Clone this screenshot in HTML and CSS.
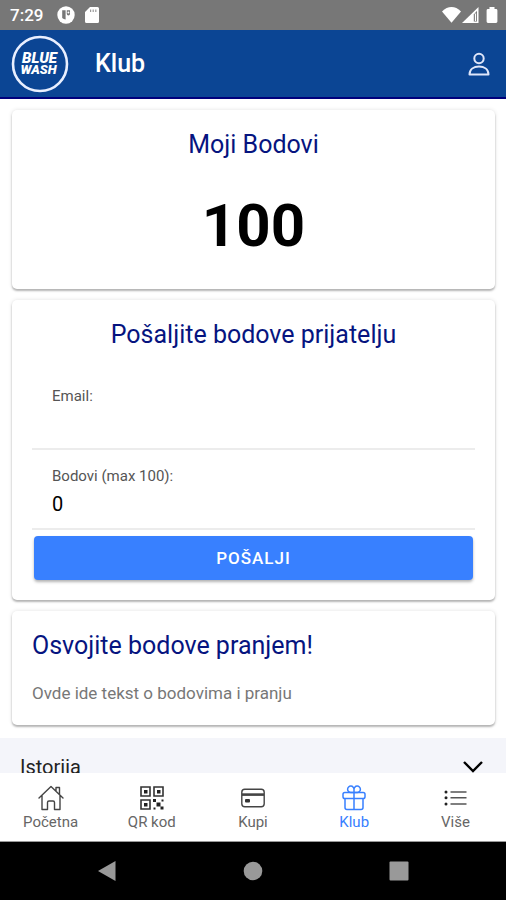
FILE: index.html
```html
<!DOCTYPE html>
<html lang="sr-Latn">
<head>
<meta charset="utf-8">
<meta name="viewport" content="width=device-width, initial-scale=1">
<title>Klub</title>
<link rel="stylesheet" href="styles.css">
</head>
<body>
<div class="app">
  <div class="status">
    <span class="time">7:29</span>
    <svg class="status-icon" width="18" height="18" viewBox="0 0 18 18" aria-hidden="true">
      <circle cx="9" cy="9" r="8.7" fill="#fff"/>
      <path d="M5.200 4.200h3.400v9.400a5.500 5.500 0 0 1-3.400-1.600z" fill="#777"/>
      <path d="M9.800 4.200H13v3.600a1.600 1.600 0 0 1-3.200 0z" fill="#777"/>
      <circle cx="11.400" cy="6.500" r="1" fill="#fff"/>
    </svg>
    <svg class="status-icon" width="14" height="16" viewBox="0 0 14 16" aria-hidden="true">
      <path d="M5 0h7.500A1.500 1.500 0 0 1 14 1.500v13a1.500 1.500 0 0 1-1.500 1.500h-11A1.500 1.500 0 0 1 0 14.500V5z" fill="#fff"/>
      <path d="M5 2.500h1.200v2.500H5zM7.600 2.500h1.200v2.500H7.600zM10.200 2.500h1.200v2.500h-1.200z" fill="#999"/>
    </svg>
    <span class="spacer"></span>
    <svg width="56" height="18" viewBox="0 0 56 18" aria-hidden="true">
      <path d="M0 5.400Q4.500 1 9.500 1T19 5.400L9.500 16.800z" fill="#fff"/>
      <path d="M36.500 1v16H20z" fill="#fff"/>
      <path d="M31.800 8.500l3.200-3.700v10.700h-3.200z" fill="#777"/>
      <path d="M32.900 8v7h1.200V7z" fill="#fff"/>
      <path d="M47.500 1h5v2h1.500a1.400 1.400 0 0 1 1.400 1.400v11.200A1.400 1.400 0 0 1 54 17h-8a1.400 1.400 0 0 1-1.400-1.400V4.400A1.400 1.400 0 0 1 46 3h1.500z" fill="#fff"/>
    </svg>
  </div>

  <header class="header">
    <svg class="logo" width="58" height="58" viewBox="0 0 58 58" role="img" aria-label="Blue Wash">
      <circle cx="29" cy="29" r="27" fill="none" stroke="#e9efff" stroke-width="2.600"/>
      <text class="logo-text" x="28.500" y="28" text-anchor="middle">BLUE</text>
      <text class="logo-text small" x="27.500" y="39" text-anchor="middle">WASH</text>
    </svg>
    <h1 class="page-title">Klub</h1>
    <button class="icon-button" type="button" aria-label="Profil">
      <svg width="22" height="24" viewBox="0 0 22 24" fill="none" stroke="#dfe6fa" stroke-width="2">
        <circle cx="11" cy="6.500" r="4.700"/>
        <path d="M1.500 22.500c0-5.500 4.500-8 9.500-8s9.500 2.500 9.500 8z" stroke-linejoin="round"/>
      </svg>
    </button>
  </header>

  <main class="content">
    <section class="card points">
      <h2 class="card-title">Moji Bodovi</h2>
      <p class="score">100</p>
    </section>

    <form class="card send">
      <h2 class="card-title">Pošaljite bodove prijatelju</h2>
      <div class="field">
        <label for="email">Email:</label>
        <input id="email" type="email">
      </div>
      <div class="field">
        <label for="bodovi">Bodovi (max 100):</label>
        <input id="bodovi" type="text" inputmode="numeric" value="0">
      </div>
      <button class="submit" type="button">POŠALJI</button>
    </form>

    <section class="card info">
      <h2 class="card-title">Osvojite bodove pranjem!</h2>
      <p class="note">Ovde ide tekst o bodovima i pranju</p>
    </section>

    <button class="history" type="button" aria-expanded="false">
      <span>Istorija</span>
      <svg width="20" height="12" viewBox="0 0 20 12" fill="none" stroke="#000" stroke-width="2.400" aria-hidden="true"><path d="M1 1l9 9 9-9"/></svg>
    </button>
  </main>

  <nav class="tabs">
    <a class="tab" href="#pocetna">
      <svg width="26" height="26" viewBox="0 0 26 26" fill="none" stroke="#444" stroke-width="1.400" stroke-linejoin="round" stroke-linecap="round">
        <path d="M1 13L13 1.500 25 13M18 6V2.500h3.500v7M4 10.500V24.500h5.500v-7a1.500 1.500 0 0 1 1.500-1.500h4a1.500 1.500 0 0 1 1.500 1.500v7H22V10.500"/>
      </svg>
      <span>Početna</span>
    </a>
    <a class="tab" href="#qr">
      <svg width="26" height="26" viewBox="0 0 26 26">
        <path d="M2 2h9v9H2zM15 2h9v9h-9zM2 15h9v9H2z" fill="none" stroke="#333" stroke-width="1.600"/>
        <path d="M5 5h3.500v3.500H5zM18 5h3.500v3.500H18zM5 18h3.500v3.500H5zM14 14h3v3h-3zM17.500 17.500h4v4h-4zM21.500 21.500h3v3h-3zM22.500 14.500h2v2h-2zM14.500 22.500h2v2h-2z" fill="#222"/>
      </svg>
      <span>QR kod</span>
    </a>
    <a class="tab" href="#kupi">
      <svg width="26" height="26" viewBox="0 0 26 26">
        <rect x="1.800" y="4.200" width="22.400" height="17.600" rx="3" fill="none" stroke="#444" stroke-width="1.400"/>
        <path d="M2 8.300h22v2.600H2z" fill="#444"/>
        <rect x="5" y="14" width="5" height="3.600" rx="1" fill="#333"/>
      </svg>
      <span>Kupi</span>
    </a>
    <a class="tab active" href="#klub" aria-current="page">
      <svg width="26" height="26" viewBox="0 0 26 26" fill="none" stroke="#3880ff" stroke-width="1.500" stroke-linejoin="round">
        <rect x="2" y="7.500" width="22" height="6" rx="1.800"/>
        <path d="M4 13.500v9a2 2 0 0 0 2 2h14a2 2 0 0 0 2-2v-9M13 4.500v20M13 7.500V4.500a3.200 3.200 0 1 0-3.200 3zM13 7.500V4.500a3.200 3.200 0 1 1 3.200 3z"/>
      </svg>
      <span>Klub</span>
    </a>
    <a class="tab" href="#vise">
      <svg width="26" height="26" viewBox="0 0 26 26">
        <path d="M8.500 7h16M8.500 12.700h16M8.500 19h16" stroke="#555" stroke-width="1.500"/>
        <g fill="#222"><circle cx="4" cy="7" r="1.500"/><circle cx="4" cy="12.700" r="1.500"/><circle cx="4" cy="19" r="1.500"/></g>
      </svg>
      <span>Više</span>
    </a>
  </nav>

  <div class="system">
    <button type="button" aria-label="Nazad"><svg width="20" height="22" viewBox="0 0 20 22"><path d="M18.500 1v20L1 11z" fill="#999"/></svg></button>
    <button type="button" aria-label="Početni ekran"><svg width="20" height="20" viewBox="0 0 20 20"><circle cx="10" cy="10" r="9.300" fill="#999"/></svg></button>
    <button type="button" aria-label="Nedavno"><svg width="20" height="20" viewBox="0 0 20 20"><rect x=".5" y=".5" width="19" height="19" rx="1" fill="#999"/></svg></button>
  </div>
</div>
</body>
</html>
```
FILE: styles.css
```css
* {
  box-sizing: border-box;
}

body {
  margin: 0;
  font-family: Roboto, "Liberation Sans", sans-serif;
  color: #000;
  background: #fff;
}

h1, h2, p {
  margin: 0;
}

button, input {
  font: inherit;
  color: inherit;
  border: 0;
  padding: 0;
  background: none;
}

svg {
  display: block;
  flex: none;
}

.app {
  display: flex;
  flex-direction: column;
  height: 100vh;
}

.status {
  display: flex;
  align-items: center;
  flex: none;
  height: 30px;
  padding: 0 8px 0 10px;
  background: #777;
  color: #fff;
}

.time {
  font-size: 17px;
  font-weight: 500;
  margin-right: 4px;
}

.status-icon {
  margin-left: 10px;
}

.spacer {
  flex: 1;
}

.header {
  display: flex;
  align-items: center;
  flex: none;
  height: 69px;
  padding: 0 16px 0 11px;
  background: #0b4594;
  border-bottom: 2px solid #00007c;
}

.logo-text {
  fill: #fff;
  font-size: 15px;
  font-weight: 900;
  font-style: italic;
}

.logo-text.small {
  font-size: 13px;
}

.page-title {
  flex: 1;
  padding-left: 26px;
  font-size: 25px;
  font-weight: 500;
  color: #fff;
}

.content {
  flex: 1;
  min-height: 0;
  overflow: hidden;
  padding-top: 11px;
}

.card {
  margin: 0 11px 11px 12px;
  padding: 20px;
  border-radius: 5px;
  background: #fff;
  box-shadow: 0 2px 2px rgba(0, 0, 0, 0.26), 0 0 4px rgba(0, 0, 0, 0.12);
}

.card-title {
  font-size: 25px;
  line-height: 30px;
  font-weight: 400;
  color: #06147f;
}

.points {
  padding-bottom: 27px;
  text-align: center;
}

.score {
  margin-top: 30px;
  font-size: 60px;
  line-height: 72px;
  font-weight: 700;
}

.send .card-title {
  text-align: center;
  margin-bottom: 20px;
}

.field {
  display: flex;
  flex-direction: column;
  padding: 12px 20px 10px;
  border-bottom: 2px solid #ececec;
}

.field label {
  padding: 4px 0;
  font-size: 15px;
  line-height: 20px;
  color: #555;
}

.field input {
  width: 100%;
  height: 28px;
  font-size: 20px;
  outline: 0;
}

.submit {
  display: block;
  width: calc(100% - 4px);
  height: 44px;
  margin: 6px 2px 0;
  border-radius: 4px;
  background: #3880ff;
  color: #fff;
  font-size: 17px;
  font-weight: 500;
  letter-spacing: 1px;
  box-shadow: 0 2px 3px rgba(0, 0, 0, 0.3);
}

.note {
  margin-top: 20px;
  font-size: 17px;
  line-height: 24px;
  color: #777;
}

.history {
  display: flex;
  align-items: center;
  justify-content: space-between;
  width: 100%;
  height: 58px;
  margin-top: 13px;
  padding: 0 23px 0 20px;
  background: #f4f5fa;
  font-size: 20px;
  color: #222;
}

.tabs {
  display: grid;
  grid-template-columns: repeat(5, 1fr);
  flex: none;
  height: 69px;
  border-bottom: 1px solid #999;
  background: #fff;
}

.tab {
  display: flex;
  flex-direction: column;
  align-items: center;
  padding-top: 12px;
  font-size: 15px;
  line-height: 22px;
  color: #666;
  text-decoration: none;
}

.tab.active {
  color: #3880ff;
}

.system {
  display: grid;
  grid-template-columns: repeat(3, 146px);
  justify-content: center;
  flex: none;
  height: 58px;
  background: #000;
}

.system button {
  display: grid;
  place-items: center;
}
```
